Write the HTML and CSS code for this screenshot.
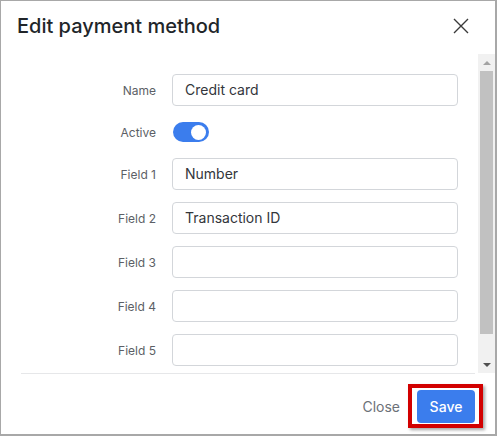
FILE: index.html
```html
<!DOCTYPE html>
<html lang="en">
<head>
<meta charset="utf-8">
<title>Edit payment method</title>
<link rel="stylesheet" href="styles.css">
</head>
<body>
<div class="frame">
  <header class="header">
    <h1 class="title">Edit payment method</h1>
    <button class="close-x" aria-label="Close">
      <svg width="16" height="16" viewBox="0 0 16 16"><path d="M1 1 L15 15 M15 1 L1 15" stroke="#3a3a3a" stroke-width="1.4" fill="none"/></svg>
    </button>
  </header>
  <div class="body">
    <div class="content">
      <form class="form">
        <label class="label">Name</label>
        <div class="input">Credit card</div>
        <label class="label">Active</label>
        <div class="switch-cell"><span class="switch"><span class="knob"></span></span></div>
        <label class="label">Field 1</label>
        <div class="input">Number</div>
        <label class="label">Field 2</label>
        <div class="input">Transaction ID</div>
        <label class="label">Field 3</label>
        <div class="input"></div>
        <label class="label">Field 4</label>
        <div class="input"></div>
        <label class="label">Field 5</label>
        <div class="input"></div>
      </form>
    </div>
    <div class="scrollbar">
      <div class="sb-btn"><span class="tri-up"></span></div>
      <div class="sb-track"><div class="sb-thumb"></div></div>
      <div class="sb-btn"><span class="tri-down"></span></div>
    </div>
  </div>
  <footer class="footer">
    <span class="btn-close">Close</span>
    <span class="save-wrap">
      <button class="btn-save">Save</button>
      <span class="highlight"></span>
    </span>
  </footer>
</div>
</body>
</html>
```
FILE: styles.css
```css
* { box-sizing: border-box; }
html, body { margin: 0; padding: 0; background: #fff; }
body { font-family: Inter, "Noto Sans", sans-serif; color: #212529; }

.frame {
  width: 497px;
  height: 436px;
  border-top: 1px solid #a8a8a8;
  border-left: 1px solid #a8a8a8;
  border-right: 2px solid #a8a8a8;
  border-bottom: 2px solid #a8a8a8;
  display: flex;
  flex-direction: column;
  background: #fff;
  overflow: hidden;
}

.header {
  height: 53px;
  flex: none;
  display: flex;
  justify-content: space-between;
  align-items: flex-start;
  padding: 13px 26px 0 16px;
}
.title {
  margin: 0;
  font-size: 20px;
  line-height: 24px;
  font-weight: 500;
  color: #212529;
  letter-spacing: 0;
}
.close-x {
  border: 0;
  background: none;
  padding: 0;
  margin-top: 4px;
  width: 16px;
  height: 16px;
  display: block;
}
.close-x svg { display: block; }

.body {
  height: 319px;
  flex: none;
  display: flex;
}
.content {
  flex: 1;
  overflow: hidden;
}
.form {
  display: grid;
  grid-template-columns: 135px 1fr;
  column-gap: 16px;
  row-gap: 12px;
  padding: 20px 20px 30px 20px;
  align-items: center;
}
.label {
  text-align: right;
  font-size: 12px;
  color: #5c5f66;
}
.input {
  height: 32px;
  border: 1px solid #d3d6da;
  border-radius: 4px;
  padding: 0 12px;
  font-size: 14px;
  line-height: 30px;
  color: #33363b;
}
.switch-cell { height: 28px; display: flex; align-items: center; }
.switch {
  width: 36px;
  height: 20px;
  border-radius: 10px;
  background: #3b7ded;
  display: flex;
  align-items: center;
  justify-content: flex-end;
  padding-right: 3px;
  margin-left: 1px;
}
.knob {
  width: 15px;
  height: 15px;
  border-radius: 50%;
  background: #fff;
}

.scrollbar {
  width: 17px;
  flex: none;
  background: #f1f1f1;
  display: flex;
  flex-direction: column;
}
.sb-btn {
  height: 17px;
  flex: none;
  display: flex;
  align-items: center;
  justify-content: center;
}
.tri-up {
  width: 0; height: 0;
  border-left: 4px solid transparent;
  border-right: 4px solid transparent;
  border-bottom: 4px solid #a3a3a3;
}
.tri-down {
  width: 0; height: 0;
  border-left: 4px solid transparent;
  border-right: 4px solid transparent;
  border-top: 4px solid #505050;
}
.sb-track {
  flex: 1;
  padding: 0 2px 22px 2px;
  display: flex;
}
.sb-thumb {
  flex: 1;
  background: #c1c1c1;
}

.footer {
  flex: 1;
  margin: 0 20px;
  border-top: 1px solid #e6e7e9;
  display: flex;
  justify-content: flex-end;
  align-items: flex-start;
  padding-top: 16px;
}
.btn-close {
  font-size: 14px;
  color: #6c7178;
  line-height: 33px;
  margin-right: 17px;
}
.save-wrap { position: relative; display: block; }
.btn-save {
  display: block;
  height: 33px;
  width: 58px;
  border: 0;
  border-radius: 4px;
  background: #3b7ded;
  color: #fff;
  font-family: Inter, "Noto Sans", sans-serif;
  font-size: 14px;
  font-weight: 500;
  padding: 0;
}
.highlight {
  position: absolute;
  left: -9px;
  top: -6px;
  width: 75px;
  height: 44px;
  border: 4px solid #d20000;
  box-shadow: 2px 2px 3px rgba(0,0,0,0.35);
  pointer-events: none;
}
```
